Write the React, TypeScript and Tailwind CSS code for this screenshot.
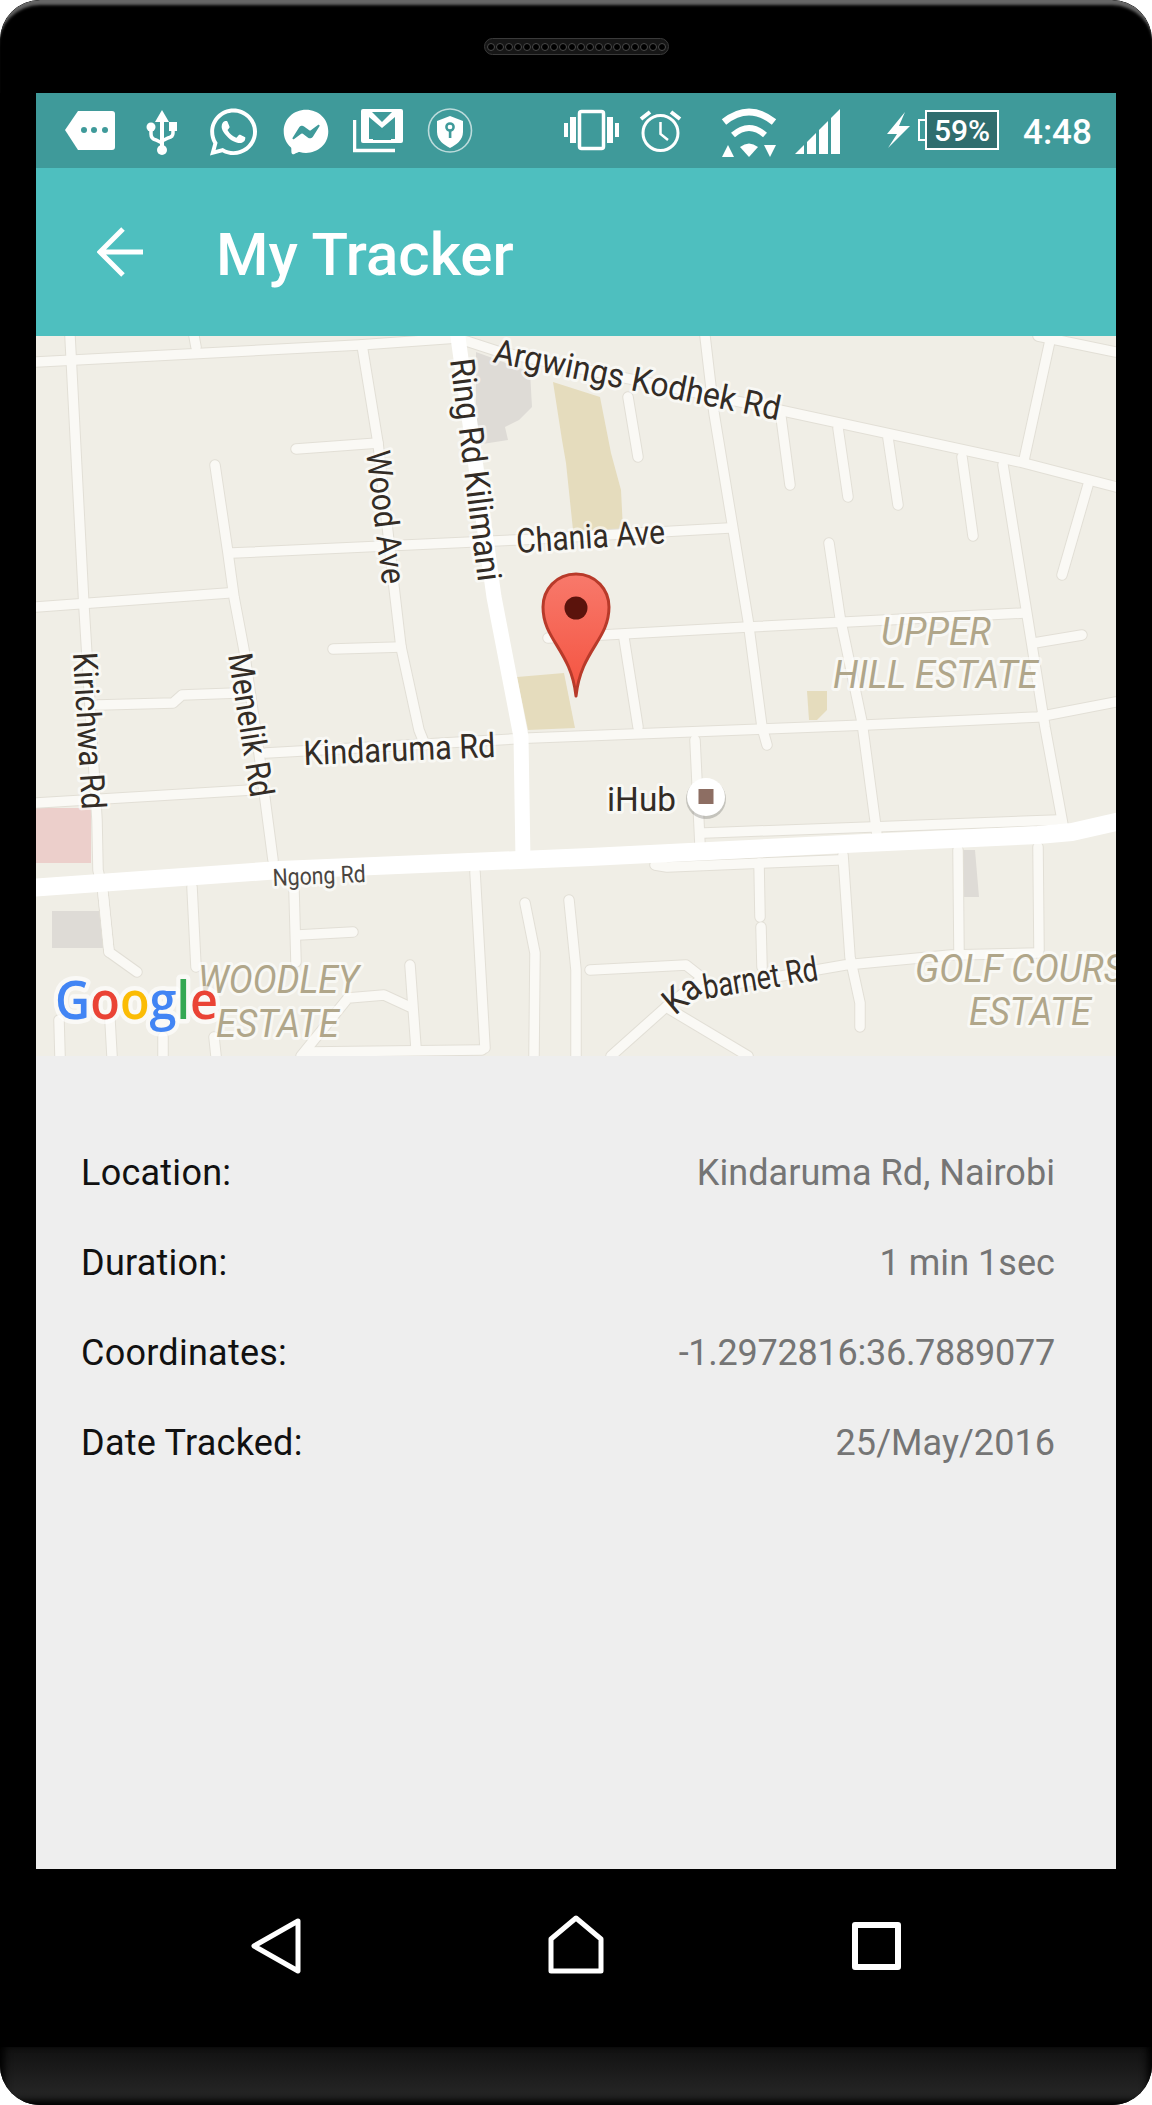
import React from 'react';
import { FaWhatsapp, FaFacebookMessenger } from 'react-icons/fa';

const minorRoads = [
  '36,362 359,345 457,338',
  '70,336 84,607 97,820 98,870 103,893 109,952 137,972',
  '194,336 196,347',
  '362,345 378,443 394,587 401,647 419,730 425,745',
  '296,449 378,443',
  '215,465 228,553 234,597 244,650 259,753 273,860',
  '232,553 516,540 729,528',
  '36,607 228,593',
  '333,649 401,647',
  '98,705 173,703 182,695 237,693',
  '36,803 251,790',
  '266,753 530,738 866,725 1038,717 1116,702',
  '457,338 500,352 779,410 1020,462 1116,487',
  '1038,336 1116,352',
  '705,336 714,413 748,620 762,727 767,745',
  '628,397 638,457',
  '781,417 790,485',
  '838,428 848,497',
  '888,438 898,505',
  '962,457 973,536',
  '1003,465 1026,608 1045,727 1063,825',
  '1051,336 1024,460',
  '1088,485 1062,575',
  '829,543 840,617 862,722 877,835',
  '548,638 748,627 1024,613',
  '624,638 638,727',
  '1034,643 1082,635',
  '695,740 700,845',
  '704,833 872,827 1058,820',
  '655,865 667,867 838,860',
  '759,863 760,917',
  '761,927 762,967',
  '843,855 850,957 860,1003 860,1027',
  '590,970 686,965 700,976',
  '700,990 845,965 951,955 1038,953',
  '958,850 959,953',
  '1038,847 1039,950',
  '700,980 666,1007 611,1056',
  '666,1007 748,1056',
  '103,893 109,952',
  '192,887 196,967',
  '294,890 296,962',
  '298,935 353,932',
  '475,872 485,1048',
  '525,903 535,953 534,1056',
  '569,900 576,970 576,1056',
  '410,965 416,1048',
  '301,1056 348,998 384,995 410,1007',
  '309,1052 482,1050',
  '59,1020 60,1056',
  '110,1020 112,1056',
  '163,1037 163,1056',
  '214,1037 216,1056',
];

const majorRoads = [
  { points: '457,330 494,597 521,737 523,860', width: 15 },
  { points: '30,888 280,870 590,857 865,843 1038,835 1072,832 1120,821', width: 18 },
];

const details = [
  { label: 'Location:', value: 'Kindaruma Rd, Nairobi', tracking: 'tracking-[0.05px]' },
  { label: 'Duration:', value: '1 min 1sec', tracking: 'tracking-[0.05px]' },
  { label: 'Coordinates:', value: '-1.2972816:36.7889077', tracking: 'tracking-[-0.25px]' },
  { label: 'Date Tracked:', value: '25/May/2016', tracking: 'tracking-[0.05px]' },
];

const roboto = 'Roboto, sans-serif';

const MapLabel: React.FC<{
  x: number;
  y: number;
  angle?: number;
  len: number;
  size?: number;
  fill?: string;
  italic?: boolean;
  children: React.ReactNode;
}> = ({ x, y, angle = 0, len, size = 34, fill = '#332c26', italic, children }) => (
  <text
    x={x}
    y={y}
    transform={`rotate(${angle} ${x} ${y})`}
    textLength={len}
    lengthAdjust="spacingAndGlyphs"
    fontFamily={roboto}
    fontSize={size}
    fontStyle={italic ? 'italic' : 'normal'}
    fill={fill}
    stroke="rgba(255,255,255,0.6)"
    strokeWidth={6}
    strokeLinejoin="round"
    paintOrder="stroke"
  >
    {children}
  </text>
);

const TrackerMap: React.FC = () => (
  <svg viewBox="36 336 1080 720" className="block w-[1080px] h-[720px] bg-[#f0eee6]">
    <defs>
      <linearGradient id="pinFill" x1="0" y1="0" x2="0" y2="1">
        <stop offset="0" stopColor="#f8796b" />
        <stop offset="1" stopColor="#f4523f" />
      </linearGradient>
    </defs>

    {/* buildings and parks */}
    <polygon points="476,352 530,372 532,407 519,420 505,427 508,440 476,445" fill="#dedbd6" />
    <polygon points="553,382 600,397 611,453 621,490 623,530 573,530 566,463 562,440" fill="#e5dcbd" />
    <polygon points="517,677 564,673 575,728 528,730" fill="#e5dcbd" />
    <polygon points="807,691 827,691 827,710 817,720 809,720" fill="#e5dcbd" />
    <rect x="36" y="808" width="55" height="55" fill="#eccfcb" />
    <rect x="52" y="911" width="51" height="37" fill="#dedbd6" />
    <polygon points="962,850 975,850 979,897 962,897" fill="#dedbd6" />

    {/* roads: casing first, then the road on top */}
    {minorRoads.map((points) => (
      <polyline key={`c${points}`} points={points} fill="none" stroke="#e2dfd6" strokeWidth={11.5} strokeLinecap="round" strokeLinejoin="round" />
    ))}
    {minorRoads.map((points) => (
      <polyline key={points} points={points} fill="none" stroke="#faf9f5" strokeWidth={9.5} strokeLinecap="round" strokeLinejoin="round" />
    ))}
    {majorRoads.map((road) => (
      <polyline key={road.points} points={road.points} fill="none" stroke="#ffffff" strokeWidth={road.width} strokeLinejoin="round" />
    ))}

    <MapLabel x={492} y={362} angle={11.5} len={292}>Argwings Kodhek Rd</MapLabel>
    <MapLabel x={450} y={360} angle={82.8} len={224}>Ring Rd Kilimani</MapLabel>
    <MapLabel x={366} y={452} angle={83} len={134}>Wood Ave</MapLabel>
    <MapLabel x={517} y={553} angle={-3.8} len={149}>Chania Ave</MapLabel>
    <MapLabel x={73} y={653} angle={86.7} len={157}>Kirichwa Rd</MapLabel>
    <MapLabel x={228} y={655} angle={81} len={145}>Menelik Rd</MapLabel>
    <MapLabel x={304} y={765} angle={-2.4} len={192}>Kindaruma Rd</MapLabel>
    <MapLabel x={273} y={886} angle={-2.5} len={93} size={24} fill="#4a4540">Ngong Rd</MapLabel>
    <MapLabel x={607} y={811} len={69}>iHub</MapLabel>
    {/* the name bends round the corner of the road */}
    <MapLabel x={675} y={1016} angle={-40} len={38} size={36}>Ka</MapLabel>
    <MapLabel x={705} y={999} angle={-9.5} len={116}>barnet Rd</MapLabel>

    <MapLabel x={881} y={645} len={110} size={38} fill="#b0a68a" italic>UPPER</MapLabel>
    <MapLabel x={833} y={688} len={205} size={38} fill="#b0a68a" italic>HILL ESTATE</MapLabel>
    <MapLabel x={198} y={993} len={161} size={38} fill="#b0a68a" italic>WOODLEY</MapLabel>
    <MapLabel x={216} y={1037} len={123} size={38} fill="#b0a68a" italic>ESTATE</MapLabel>
    <MapLabel x={915} y={982} len={230} size={38} fill="#b0a68a" italic>GOLF COURSE</MapLabel>
    <MapLabel x={969} y={1025} len={122} size={38} fill="#b0a68a" italic>ESTATE</MapLabel>

    {/* iHub place marker */}
    <circle cx="706" cy="799" r="20" fill="rgba(0,0,0,0.18)" />
    <circle cx="706" cy="797" r="19" fill="#ffffff" />
    <rect x="698.5" y="789" width="15" height="15" fill="#8d6e63" />

    {/* Google logo */}
    <text
      x={55}
      y={1019}
      textLength={163}
      lengthAdjust="spacingAndGlyphs"
      fontFamily="'Open Sans', sans-serif"
      fontSize={52}
      fontWeight={600}
      stroke="rgba(255,255,255,0.65)"
      strokeWidth={9}
      strokeLinejoin="round"
      paintOrder="stroke"
    >
      <tspan fill="#4285f4">G</tspan>
      <tspan fill="#ea4335">o</tspan>
      <tspan fill="#fbbc05">o</tspan>
      <tspan fill="#4285f4">g</tspan>
      <tspan fill="#34a853">l</tspan>
      <tspan fill="#ea4335">e</tspan>
    </text>

    {/* pin */}
    <path
      d="M576 574 C596 574 609 590 609 607 C609 640 581 650 576 696 C571 650 543 640 543 607 C543 590 556 574 576 574 Z"
      fill="url(#pinFill)"
      stroke="#b83a2a"
      strokeWidth={3}
      strokeLinejoin="round"
    />
    <circle cx="576" cy="608" r="11.5" fill="#5b130c" />
  </svg>
);

const StatusIcons: React.FC = () => (
  <div className="flex items-start h-[75px] pt-[15px] bg-[#3f9a9a] text-white">
    <svg viewBox="65 108 50 50" className="ml-[29px] w-[50px] h-[50px]">
      <path d="M78 111 H112 a3 3 0 0 1 3 3 V147 a3 3 0 0 1 -3 3 H78 L65 130 Z" fill="#fff" />
      <circle cx="84" cy="130" r="3" fill="#3f9a9a" />
      <circle cx="94" cy="130" r="3" fill="#3f9a9a" />
      <circle cx="105" cy="130" r="3" fill="#3f9a9a" />
    </svg>
    <svg viewBox="146 108 31 50" className="ml-[31px] w-[31px] h-[50px]">
      <polygon points="162,110 155,122 169,122" fill="#fff" />
      <rect x="160" y="120" width="4" height="28" fill="#fff" />
      <circle cx="162" cy="150" r="5" fill="#fff" />
      <circle cx="151" cy="127" r="4.5" fill="#fff" />
      <rect x="169" y="122" width="8" height="9" fill="#fff" />
      <path d="M151 130 V134 Q151 139 156 140 L162 143 M173 130 V133 Q173 137 168 138 L162 141" fill="none" stroke="#fff" strokeWidth={3.5} />
    </svg>
    <FaWhatsapp className="ml-[33px] -mt-[3px] w-[47px] h-[54px] shrink-0" />
    <FaFacebookMessenger className="ml-[26px] mt-[1px] w-[46px] h-[46px] shrink-0" />
    <svg viewBox="353 108 50 50" className="ml-[24px] w-[50px] h-[50px]">
      <path d="M354.5 120 V150.5 H395" fill="none" stroke="#fff" strokeWidth={3.5} />
      <rect x="361" y="109" width="42" height="34" rx="2" fill="#fff" />
      <polygon points="372,112 392,112 382,122" fill="#3f9a9a" />
      <polygon points="369,117 382,128 395,117 395,139 391,139 369,139" fill="#3f9a9a" />
      <polygon points="373,122 382,132 391,122 391,140 373,140" fill="#3f9a9a" />
    </svg>
    <svg viewBox="427 108 46 50" className="ml-[24px] w-[46px] h-[50px]">
      <circle cx="450" cy="130.5" r="21.5" fill="none" stroke="rgba(255,255,255,0.65)" strokeWidth={1.6} />
      <path d="M450 116 L463 121 V132 C463 140 456 145 450 148 C444 145 437 140 437 132 V121 Z" fill="#fff" />
      <circle cx="450" cy="127" r="3.6" fill="#fff" stroke="#3f9a9a" strokeWidth={2.5} />
      <rect x="448.8" y="130" width="2.6" height="8" fill="#3f9a9a" />
    </svg>
    <svg viewBox="564 108 56 50" className="ml-[91px] w-[56px] h-[50px]">
      <rect x="579.5" y="111.5" width="24" height="37" rx="2" fill="none" stroke="#fff" strokeWidth={3.5} />
      <rect x="607" y="117" width="6" height="26" fill="#fff" />
      <rect x="615" y="123" width="4" height="14" fill="#fff" />
      <rect x="570" y="117" width="6" height="26" fill="#fff" />
      <rect x="564" y="123" width="4" height="14" fill="#fff" />
    </svg>
    <svg viewBox="639 108 44 50" className="ml-[19px] w-[44px] h-[50px]">
      <circle cx="660.5" cy="133" r="17.5" fill="none" stroke="#fff" strokeWidth={3} />
      <path d="M660.5 122 V134 L668 140" fill="none" stroke="#fff" strokeWidth={2.5} />
      <path d="M641 119 L650 112 M680 119 L671 112" fill="none" stroke="#fff" strokeWidth={4} />
    </svg>
    <svg viewBox="720 108 58 50" className="ml-[37px] w-[58px] h-[50px]">
      <path d="M724 122 Q749 102 774 122" fill="none" stroke="#fff" strokeWidth={7} />
      <path d="M733 135 Q749 121 765 135" fill="none" stroke="#fff" strokeWidth={6} />
      <path d="M740 147 Q749 140 758 147 L749 157 Z" fill="#fff" />
      <polygon points="728,145 722,157 734,157" fill="#fff" />
      <polygon points="764,145 776,145 770,157" fill="#fff" />
    </svg>
    <svg viewBox="795 108 45 50" className="ml-[17px] w-[45px] h-[50px]">
      <polygon points="795,154 804,145 804,154" fill="#fff" />
      <polygon points="807,142 816,133 816,154 807,154" fill="#fff" />
      <polygon points="819,130 828,121 828,154 819,154" fill="#fff" />
      <polygon points="831,118 840,109 840,154 831,154" fill="#fff" />
    </svg>
    <svg viewBox="887 108 23 50" className="ml-[47px] w-[23px] h-[50px]">
      <polygon points="905,112 887,134 897,134 888,148 910,126 899,126" fill="#fff" />
    </svg>
    <svg viewBox="918 108 81 50" className="ml-[8px] w-[81px] h-[50px]">
      <rect x="926" y="111" width="72" height="38" fill="#2f6d6e" stroke="#fff" strokeWidth={2} />
      <path d="M926 120 H919 V140 H926" fill="none" stroke="#fff" strokeWidth={2} />
      <text x="962" y="141" textAnchor="middle" fontFamily={roboto} fontSize={30} fontWeight={500} fill="#fff">59%</text>
    </svg>
    <span className="ml-[24px] font-['Roboto'] font-medium text-[35px] leading-[50px]">4:48</span>
  </div>
);

const App: React.FC = () => {
  return (
    <div className="w-[1152px] h-[2105px] bg-white overflow-hidden">
      <div className="flex flex-col h-full bg-black rounded-[40px] overflow-hidden">
        <div className="flex justify-center h-[93px] pt-[38px] rounded-t-[40px] bg-black shadow-[inset_0_7px_3px_-2px_#666666]">
          <div className="flex items-center gap-[1px] h-[17px] px-[2px] rounded-full bg-[#161616] border border-[#3a3a3a]">
            {Array.from({ length: 20 }).map((_, i) => (
              <div key={i} className="w-[8px] h-[8px] rounded-full bg-black border border-[#4a4a4a]" />
            ))}
          </div>
        </div>

        <div className="flex flex-col mx-[36px] h-[1776px] bg-[#eeeeee] font-['Roboto']">
          <StatusIcons />
          <div className="flex items-center h-[168px] bg-[#4ebfbf] text-white">
            <svg viewBox="0 0 47 50" className="ml-[61px] w-[47px] h-[50px] shrink-0">
              <path d="M46 25 H3 M26 2 L3 25 L26 48" fill="none" stroke="#fff" strokeWidth={5} />
            </svg>
            <h1 className="ml-[72px] pt-[5px] text-[60px] font-medium leading-none">My Tracker</h1>
          </div>
          <TrackerMap />
          <div className="flex flex-col pt-[72px] pl-[45px] pr-[61px] text-[36px] leading-[90px]">
            {details.map((row) => (
              <div key={row.label} className="flex justify-between">
                <span className="text-[#111111] tracking-[0.25px]">{row.label}</span>
                <span className={`text-[#757575] ${row.tracking}`}>{row.value}</span>
              </div>
            ))}
          </div>
        </div>

        <div className="flex justify-center items-start gap-[240px] h-[178px] pt-[46px] bg-black">
          <svg viewBox="0 0 60 60" className="w-[60px] h-[60px]">
            <path d="M52 6 L8 31 L52 56 Z" fill="none" stroke="#fff" strokeWidth={5} strokeLinejoin="round" />
          </svg>
          <svg viewBox="0 0 60 60" className="w-[60px] h-[60px]">
            <path d="M30 3 L55 24 V56 H5 V24 Z" fill="none" stroke="#fff" strokeWidth={5} strokeLinejoin="round" />
          </svg>
          <svg viewBox="0 0 60 60" className="w-[60px] h-[60px]">
            <rect x="9" y="10" width="43" height="42" fill="none" stroke="#fff" strokeWidth={6} strokeLinejoin="round" />
          </svg>
        </div>

        <div className="flex-1 bg-gradient-to-b from-[#111111] to-[#2a2a2a] shadow-[inset_0_-9px_9px_-4px_#000000,inset_8px_0_8px_-4px_#000000,inset_-8px_0_8px_-4px_#000000]" />
      </div>
    </div>
  );
};

export default App;
